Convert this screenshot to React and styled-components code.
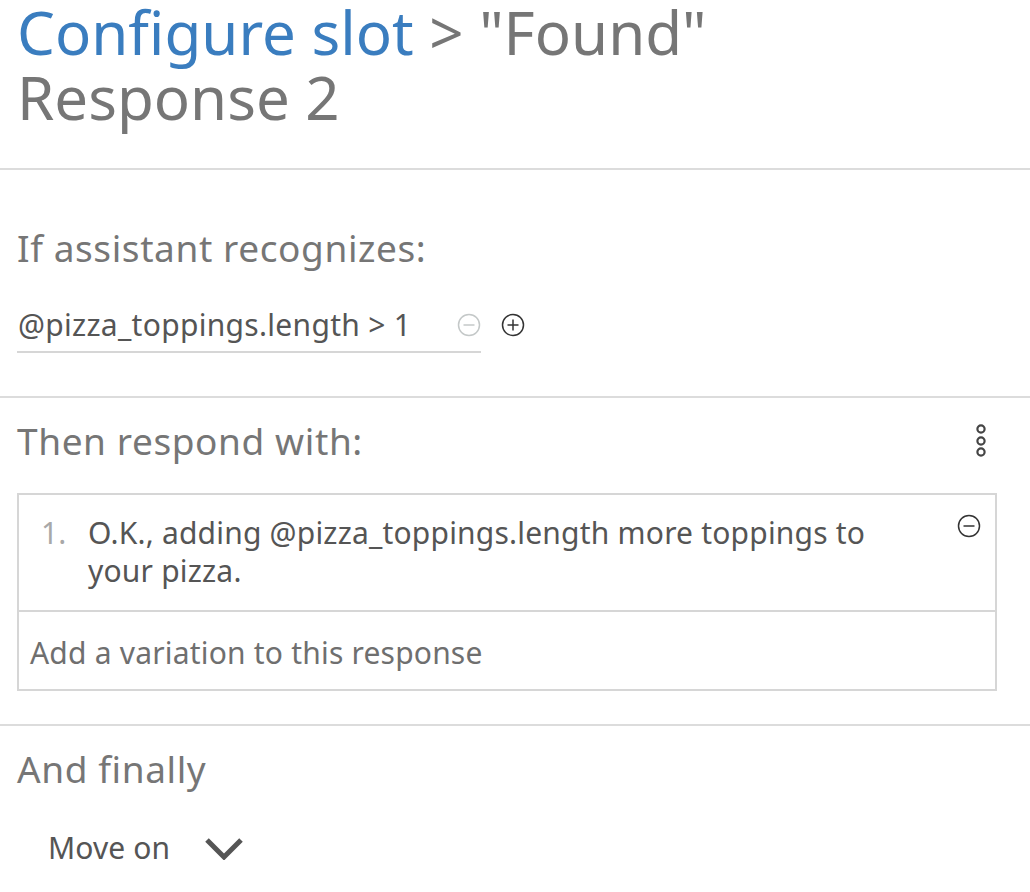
import React from 'react';
import styled, { createGlobalStyle } from 'styled-components';

const GlobalStyle = createGlobalStyle`
  body {
    margin: 0;
    background: #fff;
    font-family: 'Noto Sans', 'Open Sans', sans-serif;
  }
`;

const Page = styled.div`
  width: 1030px;
  display: flex;
  flex-direction: column;
`;

const Section = styled.section`
  padding: ${(p) => p.pad || '0 33px 0 17px'};
  border-bottom: ${(p) => (p.last ? 'none' : '2px solid #dcdcdc')};
  height: ${(p) => p.h}px;
  box-sizing: border-box;
  display: flex;
  flex-direction: column;
`;

const Title = styled.h1`
  margin: 0;
  max-width: 740px;
  font-size: 60px;
  line-height: 65px;
  font-weight: 400;
  color: #767676;
`;

const Crumb = styled.span`
  color: #3a7dbf;
`;

const Label = styled.h2`
  margin: 0;
  font-size: 37px;
  line-height: 44px;
  letter-spacing: 0.6px;
  font-weight: 400;
  color: #767676;
`;

const LabelRow = styled.div`
  display: flex;
  align-items: center;
  justify-content: space-between;
`;

const ConditionRow = styled.div`
  display: flex;
  align-items: flex-start;
  gap: 20px;
  margin-top: 35px;
`;

const ConditionInput = styled.div`
  width: 464px;
  box-sizing: border-box;
  border-bottom: 2px solid #d6d6d6;
  display: flex;
  align-items: center;
  justify-content: space-between;
  padding: 0 0 6px 1px;
  font-size: 30px;
  line-height: 40px;
  letter-spacing: 0.3px;
  color: #555;
`;

const IconButton = styled.button`
  border: none;
  background: none;
  padding: 0;
  margin: ${(p) => p.m || '0'};
  display: flex;
  align-items: center;
  cursor: pointer;
`;

const ResponseBox = styled.div`
  margin-top: 30px;
  border: 2px solid #d6d6d6;
  display: flex;
  flex-direction: column;
`;

const ResponseItem = styled.div`
  display: flex;
  align-items: flex-start;
  padding: 19px 14px 20px 22px;
  border-bottom: 2px solid #d6d6d6;
`;

const ItemNumber = styled.span`
  width: 47px;
  flex-shrink: 0;
  font-size: 30px;
  line-height: 38px;
  color: #a8a8a8;
`;

const ItemText = styled.p`
  margin: 0;
  max-width: 800px;
  font-size: 30px;
  line-height: 38px;
  letter-spacing: 0.2px;
  color: #555;
`;

const AddVariation = styled.div`
  padding: 22px 11px 17px;
  font-size: 30px;
  line-height: 38px;
  letter-spacing: 0.2px;
  color: #6f6f6f;
`;

const Select = styled.div`
  display: flex;
  align-items: center;
  gap: 34px;
  margin-top: 37px;
  padding-left: 31px;
  font-size: 30px;
  line-height: 40px;
  letter-spacing: 0.1px;
  color: #555;
`;

const CircleIcon = ({ plus, color, size = 24 }) => (
  <svg width={size} height={size} viewBox="0 0 24 24" fill="none" stroke={color} strokeWidth="1.5">
    <circle cx="12" cy="12" r="10.5" />
    <line x1="6.5" y1="12" x2="17.5" y2="12" />
    {plus && <line x1="12" y1="6.5" x2="12" y2="17.5" />}
  </svg>
);

const Kebab = () => (
  <svg width="12" height="36" viewBox="0 0 12 36" fill="none" stroke="#444" strokeWidth="2.2">
    <circle cx="6" cy="6" r="3.6" />
    <circle cx="6" cy="18" r="3.6" />
    <circle cx="6" cy="29" r="3.6" />
  </svg>
);

const Chevron = () => (
  <svg width="40" height="24" viewBox="0 0 40 24" fill="none" stroke="#555" strokeWidth="5">
    <polyline points="3,4 20,21 37,4" />
  </svg>
);

export default function App() {
  return (
    <Page>
      <GlobalStyle />
      <Section h={170}>
        <Title>
          <Crumb>Configure slot</Crumb> &gt; "Found" Response 2
        </Title>
      </Section>

      <Section h={228} pad="56px 33px 0 17px">
        <Label>If assistant recognizes:</Label>
        <ConditionRow>
          <ConditionInput>
            <span>@pizza_toppings.length &gt; 1</span>
            <IconButton>
              <CircleIcon color="#c4c8c8" />
            </IconButton>
          </ConditionInput>
          <IconButton m="8px 0 0">
            <CircleIcon plus color="#333" />
          </IconButton>
        </ConditionRow>
      </Section>

      <Section h={328} pad="21px 33px 0 17px">
        <LabelRow>
          <Label>Then respond with:</Label>
          <IconButton m="0 10px 0 0">
            <Kebab />
          </IconButton>
        </LabelRow>
        <ResponseBox>
          <ResponseItem>
            <ItemNumber>1.</ItemNumber>
            <ItemText>O.K., adding @pizza_toppings.length more toppings to your pizza.</ItemText>
            <IconButton m="0 0 0 auto">
              <CircleIcon color="#333" />
            </IconButton>
          </ResponseItem>
          <AddVariation>Add a variation to this response</AddVariation>
        </ResponseBox>
      </Section>

      <Section last h={166} pad="21px 33px 0 17px">
        <Label>And finally</Label>
        <Select>
          <span>Move on</span>
          <Chevron />
        </Select>
      </Section>
    </Page>
  );
}
